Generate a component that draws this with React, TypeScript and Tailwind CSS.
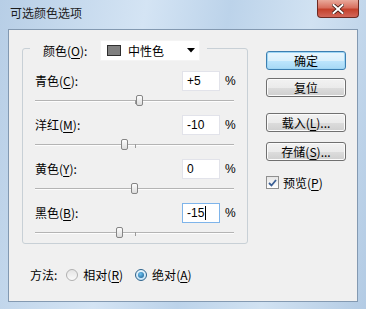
const rows = [
  { name: '青色', key: 'C', value: 5, text: '+5' },
  { name: '洋红', key: 'M', value: -10, text: '-10' },
  { name: '黄色', key: 'Y', value: 0, text: '0' },
  { name: '黑色', key: 'B', value: -15, text: '-15', focused: true },
];

function Mnemonic({ label, k }: { label: string; k: string }) {
  return (
    <span>
      {label}(<span className="underline underline-offset-[2px]">{k}</span>)
    </span>
  );
}

function Button({ children, primary }: { children: React.ReactNode; primary?: boolean }) {
  return (
    <button
      className={`w-[80px] h-[19px] rounded-[3px] border text-[12px] leading-none text-black flex items-center justify-center ${
        primary
          ? 'border-[#3c7fb1] shadow-[inset_0_0_0_1px_#9fd6f4] bg-[linear-gradient(#eaf6fd_0%,#d9f0fc_50%,#bee6fd_50%,#a7d9f5_100%)]'
          : 'border-[#707070] shadow-[inset_0_0_0_1px_#fbfbfb] bg-[linear-gradient(#f2f2f2_0%,#ebebeb_50%,#dddddd_50%,#cfcfcf_100%)]'
      }`}
    >
      {children}
    </button>
  );
}

function Slider({ value }: { value: number }) {
  return (
    <div className="relative mt-[4px] ml-[12px] w-[199px] h-[11px]">
      <div className="absolute left-0 right-0 top-[5px] h-[1px] bg-[#b4b4b4]" />
      <div className="absolute left-0 right-0 top-[6px] h-[1px] bg-[#fdfdfd]" />
      <div className="absolute left-[100px] top-[5px] w-[1px] h-[4px] bg-[#9a9a9a]" />
      <div
        className="absolute top-0 w-[7px] h-[11px] rounded-[2px] border border-[#858585] bg-[linear-gradient(#fdfdfd,#dcdcdc)]"
        style={{ left: 96 + value }}
      />
    </div>
  );
}

function Radio({ checked }: { checked?: boolean }) {
  return (
    <span
      className={`w-[12px] h-[12px] rounded-full border flex items-center justify-center ${
        checked
          ? 'border-[#2c628b] bg-[linear-gradient(#e6f4fc,#c7e4f7)]'
          : 'border-[#b0b0b0] bg-[linear-gradient(#e4e4e4,#fafafa)]'
      }`}
    >
      {checked && <span className="w-[6px] h-[6px] rounded-full bg-[radial-gradient(circle_at_40%_35%,#6fc3f1,#14578c)]" />}
    </span>
  );
}

export default function App() {
  return (
    <div className="w-[366px] h-[309px] flex flex-col overflow-hidden text-[12px] text-black font-['Noto_Sans_CJK_SC',sans-serif] bg-[linear-gradient(100deg,#b7cee6_0%,#d4e4f4_35%,#bcd3ea_55%,#d1e2f2_75%,#b3cbe4_100%)]">
      {/* Title bar */}
      <div className="h-[29px] flex items-start">
        <span className="pl-[10px] pt-[6px] text-[12px] leading-[14px] text-[#1c1c1c]">可选颜色选项</span>
        <div className="ml-auto mr-[7px] w-[42px] h-[18px] rounded-b-[4px] border border-t-0 border-[#6d2a22] bg-[linear-gradient(#e9a99b_0%,#d8705f_45%,#c4412c_55%,#d2675a_100%)] flex items-center justify-center">
          <svg width="12" height="10" viewBox="0 0 12 10">
            <path d="M1.5 1 L10.5 9 M10.5 1 L1.5 9" stroke="#3d1710" strokeWidth="3.6" strokeLinecap="square" />
            <path d="M1.5 1 L10.5 9 M10.5 1 L1.5 9" stroke="#ffffff" strokeWidth="2" strokeLinecap="square" />
          </svg>
        </div>
      </div>

      {/* Client area */}
      <div className="flex-1 mx-[8px] mb-[7px] border border-[#8399b1] bg-[#f0f0f0] flex flex-col">
        <div className="flex">
          {/* Group box */}
          <div className="ml-[13px] mt-[18px] w-[226px] h-[196px] rounded-[3px] border border-[#c8d0d6] flex flex-col">
            <div className="-mt-[9px] ml-[7px] w-fit flex items-center bg-[#f0f0f0] pl-[13px] pr-[7px]">
              <span className="w-[57px]">
                <Mnemonic label="颜色" k="O" />:
              </span>
              <div className="w-[100px] h-[21px] bg-white border border-[#f4f4f4] flex items-center">
                <span className="ml-[6px] w-[14px] h-[11px] bg-[#7f7f7f] border border-[#2e2e2e]" />
                <span className="ml-[7px]">中性色</span>
                <svg className="ml-auto mr-[4px]" width="8" height="5" viewBox="0 0 8 5">
                  <path d="M0 0 H8 L4 4.5 Z" fill="#000" />
                </svg>
              </div>
            </div>

            <div className="mt-[10px] flex flex-col gap-[9px]">
              {rows.map((r) => (
                <div key={r.key}>
                  <div className="flex items-center h-[20px] pl-[12px] pr-[10px]">
                    <span className="flex-1">
                      <Mnemonic label={r.name} k={r.key} />:
                    </span>
                    <div
                      className={`w-[38px] h-[20px] bg-white border flex items-center pl-[4px] font-['Liberation_Sans',sans-serif] ${
                        r.focused ? 'border-[#7eb4ea]' : 'border-[#e2e3ea]'
                      }`}
                    >
                      {r.text}
                      {r.focused && <span className="ml-[1px] w-[1px] h-[14px] bg-black" />}
                    </div>
                    <span className="ml-[5px] w-[12px] font-['Liberation_Sans',sans-serif]">%</span>
                  </div>
                  <Slider value={r.value} />
                </div>
              ))}
            </div>
          </div>

          {/* Right column */}
          <div className="ml-[18px] pt-[21px] flex flex-col">
            <Button primary>确定</Button>
            <div className="mt-[8px]">
              <Button>复位</Button>
            </div>
            <div className="mt-[16px]">
              <Button>
                <Mnemonic label="载入" k="L" />...
              </Button>
            </div>
            <div className="mt-[10px]">
              <Button>
                <Mnemonic label="存储" k="S" />...
              </Button>
            </div>
            <label className="mt-[15px] flex items-center gap-[4px] h-[13px]">
              <span className="w-[13px] h-[13px] border border-[#8f8f8f] bg-[linear-gradient(#e6e6e6,#ffffff)] flex items-center justify-center">
                <svg width="9" height="8" viewBox="0 0 9 8">
                  <path d="M1 4 L3.5 6.5 L8 1" fill="none" stroke="#3b5f95" strokeWidth="1.8" />
                </svg>
              </span>
              <Mnemonic label="预览" k="P" />
            </label>
          </div>
        </div>

        {/* Method */}
        <div className="mt-[23px] ml-[21px] flex items-center h-[16px]">
          <span>方法:</span>
          <span className="ml-[9px]"><Radio /></span>
          <span className="ml-[5px]">
            <Mnemonic label="相对" k="R" />
          </span>
          <span className="ml-[12px]"><Radio checked /></span>
          <span className="ml-[5px]">
            <Mnemonic label="绝对" k="A" />
          </span>
        </div>
      </div>
    </div>
  );
}
